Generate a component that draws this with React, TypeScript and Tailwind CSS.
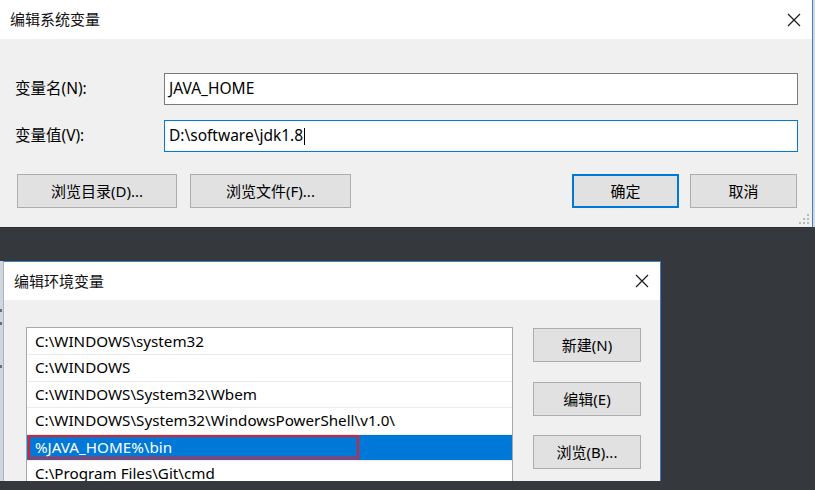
import React from "react";

const FONT = "font-['Noto_Sans','Noto_Sans_CJK_SC',sans-serif]";

function CloseIcon() {
  return (
    <svg width="14" height="14" viewBox="0 0 14 14" className="block">
      <path d="M1 1 L13 13 M13 1 L1 13" stroke="#1a1a1a" strokeWidth="1.2" fill="none" />
    </svg>
  );
}

function ResizeGrip() {
  const dots = [
    [8, 0],
    [8, 4],
    [4, 4],
    [8, 8],
    [4, 8],
    [0, 8],
  ];
  return (
    <svg width="11" height="11" viewBox="0 0 11 11" className="block">
      {dots.map(([x, y], i) => (
        <rect key={i} x={x} y={y} width="2" height="2" fill="#b8b8b8" />
      ))}
    </svg>
  );
}

function Button({
  children,
  className = "",
  primary = false,
}: {
  children: React.ReactNode;
  className?: string;
  primary?: boolean;
}) {
  return (
    <div
      className={`flex shrink-0 items-center justify-center bg-[#e1e1e1] text-[15px] text-black ${
        primary ? "border-2 border-[#0078d7]" : "border border-[#adadad]"
      } ${className}`}
    >
      {children}
    </div>
  );
}

function TitleBar({ title, h }: { title: string; h: string }) {
  return (
    <div className={`flex shrink-0 items-center justify-between bg-white pl-[10px] ${h}`}>
      <span className="text-[15px] text-[#111]">{title}</span>
      <div className="flex w-[36px] items-center justify-center">
        <CloseIcon />
      </div>
    </div>
  );
}

const paths = [
  "C:\\WINDOWS\\system32",
  "C:\\WINDOWS",
  "C:\\WINDOWS\\System32\\Wbem",
  "C:\\WINDOWS\\System32\\WindowsPowerShell\\v1.0\\",
  "%JAVA_HOME%\\bin",
  "C:\\Program Files\\Git\\cmd",
];

export default function App() {
  return (
    <div className={`flex h-[490px] w-[815px] flex-col overflow-hidden bg-[#35393e] ${FONT}`}>
      {/* system variable dialog */}
      <div className="flex h-[228px] shrink-0">
        <div className="flex w-[813px] flex-col border-r border-b border-r-[#3d7fc4] border-b-[#2a2d31] bg-[#f0f0f0]">
          <TitleBar title="编辑系统变量" h="h-[39px]" />
          <div className="relative flex flex-1 flex-col pl-[15px] pr-[14px] pt-[34px]">
            <div className="flex h-[32px] shrink-0 items-center">
              <span className="w-[149px] text-[15.5px] text-black">变量名(N):</span>
              <div className="flex h-full flex-1 items-center border border-[#7a7a7a] bg-white pl-[4px] text-[15.5px] text-black">
                JAVA_HOME
              </div>
            </div>
            <div className="mt-[15px] flex h-[32px] shrink-0 items-center">
              <span className="w-[149px] text-[15.5px] text-black">变量值(V):</span>
              <div className="flex h-full flex-1 items-center border border-[#0078d7] bg-white pl-[4px] text-[15.5px] text-black">
                <span>D:\software\jdk1.8</span>
                <span className="ml-[1px] h-[17px] w-[1px] bg-black" />
              </div>
            </div>
            <div className="mt-[22px] flex h-[34px] shrink-0 items-stretch">
              <Button className="ml-[2px] w-[160px]">浏览目录(D)...</Button>
              <Button className="ml-[13px] w-[161px]">浏览文件(F)...</Button>
              <div className="flex-1" />
              <Button primary className="w-[107px]">确定</Button>
              <Button className="ml-[11px] mr-[1px] w-[107px]">取消</Button>
            </div>
            <div className="absolute bottom-[2px] right-[2px]">
              <ResizeGrip />
            </div>
          </div>
        </div>
        <div className="h-[227px] flex-1 bg-[#d6d8da]" />
      </div>

      {/* environment variable dialog */}
      <div className="mt-[33px] flex h-[220px] shrink-0">
        <div className="flex w-[3px] flex-col bg-[#d3d6d9]">
          <div className="mt-[48px] h-[3px] w-[2px] bg-[#6a6e73]" />
          <div className="mt-[10px] h-[3px] w-[2px] bg-[#6a6e73]" />
          <div className="mt-[40px] h-[3px] w-[2px] bg-[#6a6e73]" />
        </div>
        <div className="flex w-[658px] flex-col overflow-hidden border-t border-r border-l border-t-[#3d7fc4] border-r-[#3d7fc4] border-l-[#9fb6cf] bg-[#f0f0f0]">
          <TitleBar title="编辑环境变量" h="h-[38px]" />
          <div className="flex min-h-0 flex-1 pl-[22px] pt-[27px]">
            <div className="w-[487px] shrink-0 border-t border-r border-l border-[#a8a8a8] bg-white pt-[0.5px]">
              {paths.map((p, i) => {
                const selected = i === 4;
                return (
                  <div
                    key={p}
                    className={`relative flex h-[26.5px] items-center border-b border-[#ebebeb] pl-[8px] text-[15.2px] ${
                      selected ? "bg-[#0078d7] text-white" : "text-black"
                    }`}
                  >
                    {p}
                    {selected && (
                      <div className="absolute left-[1px] top-[0.5px] h-[24px] w-[331px] border-2 border-[#e0202a]" />
                    )}
                  </div>
                );
              })}
            </div>
            <div className="ml-[20px] flex flex-col pt-[1px]">
              <Button className="h-[34px] w-[108px]">新建(N)</Button>
              <Button className="mt-[20px] h-[34px] w-[108px]">编辑(E)</Button>
              <Button className="mt-[19px] h-[34px] w-[108px]">浏览(B)...</Button>
            </div>
          </div>
        </div>
        <div className="flex-1" />
      </div>
    </div>
  );
}
